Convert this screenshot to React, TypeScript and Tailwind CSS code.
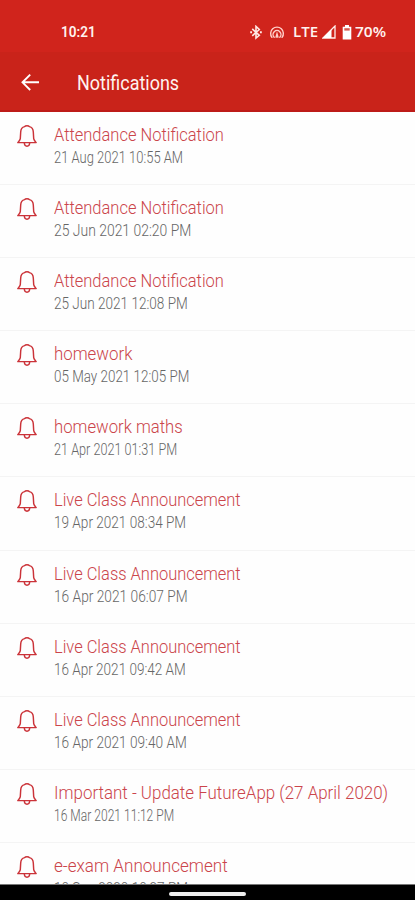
import { useLayoutEffect, useRef, useState } from "react";

type Notice = { title: string; titleWidth: number; date: string; dateWidth: number };

const notices: Notice[] = [
  { title: "Attendance Notification", titleWidth: 170, date: "21 Aug 2021 10:55 AM", dateWidth: 129 },
  { title: "Attendance Notification", titleWidth: 170, date: "25 Jun 2021 02:20 PM", dateWidth: 137.5 },
  { title: "Attendance Notification", titleWidth: 170, date: "25 Jun 2021 12:08 PM", dateWidth: 134 },
  { title: "homework", titleWidth: 78, date: "05 May 2021 12:05 PM", dateWidth: 135 },
  { title: "homework maths", titleWidth: 128.5, date: "21 Apr 2021 01:31 PM", dateWidth: 123.5 },
  { title: "Live Class Announcement", titleWidth: 187, date: "19 Apr 2021 08:34 PM", dateWidth: 132.5 },
  { title: "Live Class Announcement", titleWidth: 187, date: "16 Apr 2021 06:07 PM", dateWidth: 134 },
  { title: "Live Class Announcement", titleWidth: 187, date: "16 Apr 2021 09:42 AM", dateWidth: 132 },
  { title: "Live Class Announcement", titleWidth: 187, date: "16 Apr 2021 09:40 AM", dateWidth: 133 },
  { title: "Important - Update FutureApp (27 April 2020)", titleWidth: 334, date: "16 Mar 2021 11:12 PM", dateWidth: 120 },
  { title: "e-exam Announcement", titleWidth: 173.5, date: "10 Sep 2020 10:27 PM", dateWidth: 134 },
];

/* Condenses a line of text horizontally so that it spans the given width. */
function FitText({ text, width, className }: { text: string; width: number; className: string }) {
  const ref = useRef<HTMLSpanElement>(null);
  const [scale, setScale] = useState(1);
  useLayoutEffect(() => {
    if (ref.current) setScale(width / ref.current.offsetWidth);
  }, [text, width]);
  return (
    <span className={`block whitespace-nowrap ${className}`} style={{ width }}>
      <span ref={ref} className="inline-block origin-left" style={{ transform: `scaleX(${scale})` }}>
        {text}
      </span>
    </span>
  );
}

function Bell() {
  return (
    <svg viewBox="0 0 22 24" className="mt-3 h-6 w-[22px] shrink-0" fill="none" stroke="#cb3339" strokeWidth="1.45" strokeLinecap="round" strokeLinejoin="round">
      <path d="M8.6 2.6C6 3.2 4.8 5.2 4.7 8L4.3 14.6C4.1 16.2 3.2 16.8 1.8 18.6H20.2C18.8 16.8 17.9 16.2 17.7 14.6L17.3 8C17.2 5.2 16 3.2 13.4 2.6C12.6 1.4 9.4 1.4 8.6 2.6Z" />
      <path d="M8.3 19C8.5 21.2 9.5 22.2 11 22.2S13.5 21.2 13.7 19" />
    </svg>
  );
}

function StatusBar() {
  return (
    <div className="flex h-[52px] items-start bg-[#d0241c] pt-[23px] pl-[61px]">
      <FitText text="10:21" width={35} className="text-[15.5px] leading-[18px] font-semibold" />
      <svg viewBox="0 0 14 16" className="mt-[2px] ml-[153px] h-[15px] w-[14px] shrink-0" fill="none" stroke="#ffe9e5" strokeWidth="1.7">
        <path d="M3 4.2L10.5 11L7 14V1.5L10.5 4.8L3 11.5" />
        <path d="M.8 7.8H2.8M11.2 7.8H13.2" strokeWidth="2.2" />
      </svg>
      <svg viewBox="0 0 16 16" className="mt-[2px] ml-[6px] h-[15px] w-4 shrink-0" fill="none" stroke="#ffd0ca" strokeWidth="1.5" strokeLinecap="round">
        <path d="M2.6 13.2A6.8 6.8 0 1 1 13.4 13.2" />
        <path d="M5 13A4.2 4.2 0 1 1 11 13" />
        <path d="M7 13L8 9.4L9 13" />
      </svg>
      <FitText text="LTE" width={25} className="ml-[8px] font-['Open_Sans',sans-serif] text-[15px] leading-[16px] font-semibold" />
      <svg viewBox="0 0 14 14" className="mt-[2px] ml-[4px] h-[14px] w-[14px] shrink-0">
        <path d="M1 13L13 1V13Z" fill="none" stroke="#fff0ed" strokeWidth="1.3" />
        <path d="M1 13L9.5 4.5V13Z" fill="#fff" />
      </svg>
      <svg viewBox="0 0 10 15" className="mt-[2px] ml-[6px] h-[15px] w-[10px] shrink-0">
        <path d="M3 0H7V1.7H9.3V14.5H.7V1.7H3Z" fill="#fff" />
        <path d="M2.3 3.2H7.7V5.6H2.3Z" fill="#d75b50" />
      </svg>
      <FitText text="70%" width={31} className="ml-[3px] font-['Open_Sans',sans-serif] text-[15px] leading-[16px] font-semibold" />
    </div>
  );
}

export default function App() {
  return (
    <div className="flex h-[900px] w-[415px] flex-col overflow-hidden bg-[#fefefe] font-['Roboto',sans-serif]">
      <header className="shrink-0 text-[#fff3f0]">
        <StatusBar />
        <div className="flex h-[60px] items-start border-b-2 border-[#bd1b18] bg-[#c9231a] pt-[19px] pl-[21px]">
          <svg viewBox="0 0 20 20" className="mt-[1px] h-5 w-5 shrink-0" fill="none" stroke="#fff" strokeWidth="1.9">
            <path d="M18 10.3H2M9.2 2.6L1.5 10.3L9.2 18" />
          </svg>
          <FitText text="Notifications" width={102.5} className="ml-[36px] text-[20.5px] leading-[25px]" />
        </div>
      </header>
      <main className="min-h-0 flex-1 overflow-hidden">
        {notices.map((n, i) => (
          <div key={i} className="flex h-[73.1px] border-b-[1.5px] border-[#f4f4f4] pl-4">
            <Bell />
            <div className="ml-[15.5px] pt-[11px]">
              <FitText text={n.title} width={n.titleWidth} className="text-[19px] leading-6 font-light text-[#cb454b]" />
              <FitText text={n.date} width={n.dateWidth} className="text-[16.5px] leading-[22px] font-light text-[#666]" />
            </div>
          </div>
        ))}
      </main>
      <footer className="flex h-[16px] shrink-0 items-start justify-center border-t border-[#777] bg-black pt-[7px]">
        <div className="h-[3.5px] w-[77px] rounded-full bg-[#eee]" />
      </footer>
    </div>
  );
}
